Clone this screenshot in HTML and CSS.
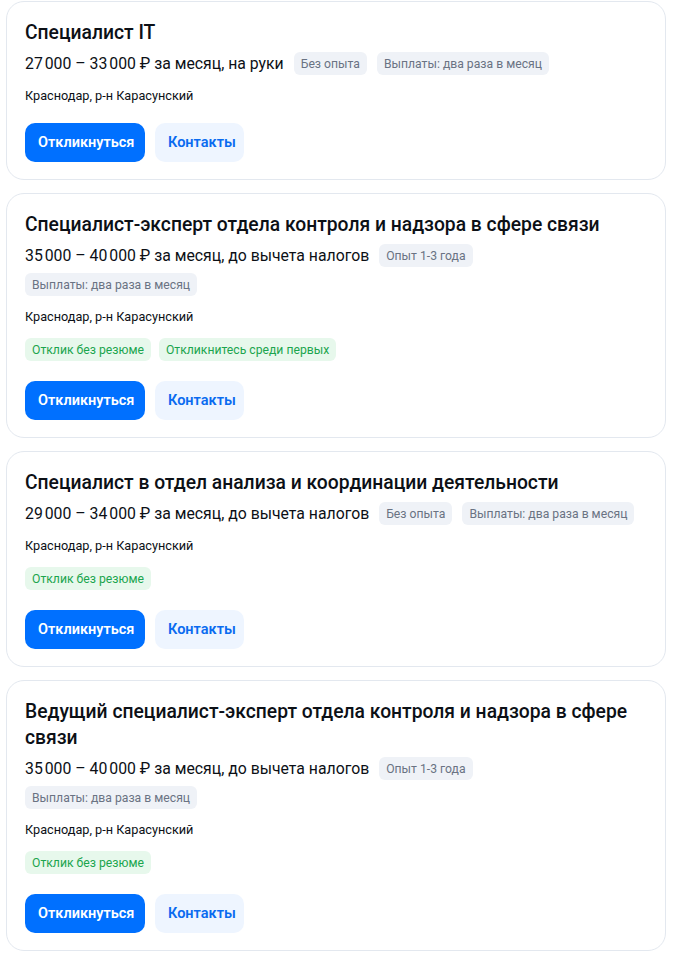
FILE: index.html
```html
<!DOCTYPE html>
<html lang="ru">
<head>
<meta charset="utf-8">
<link rel="stylesheet" href="styles.css">
</head>
<body>
<div class="list">
  <div class="card">
    <div class="title">Специалист IT</div>
    <div class="tags-row">
      <span class="salary">27&#8239;000 – 33&#8239;000 ₽ за месяц, на руки</span>
      <span class="tag">Без опыта</span>
      <span class="tag">Выплаты: два раза в месяц</span>
    </div>
    <div class="location">Краснодар, р-н Карасунский</div>
    <div class="actions">
      <button class="btn btn-primary">Откликнуться</button>
      <button class="btn btn-secondary">Контакты</button>
    </div>
  </div>

  <div class="card">
    <div class="title">Специалист-эксперт отдела контроля и надзора в сфере связи</div>
    <div class="tags-row">
      <span class="salary">35&#8239;000 – 40&#8239;000 ₽ за месяц, до вычета налогов</span>
      <span class="tag">Опыт 1-3 года</span>
      <span class="tag">Выплаты: два раза в месяц</span>
    </div>
    <div class="location">Краснодар, р-н Карасунский</div>
    <div class="green-row">
      <span class="tag tag-green">Отклик без резюме</span>
      <span class="tag tag-green">Откликнитесь среди первых</span>
    </div>
    <div class="actions">
      <button class="btn btn-primary">Откликнуться</button>
      <button class="btn btn-secondary">Контакты</button>
    </div>
  </div>

  <div class="card">
    <div class="title">Специалист в отдел анализа и координации деятельности</div>
    <div class="tags-row">
      <span class="salary">29&#8239;000 – 34&#8239;000 ₽ за месяц, до вычета налогов</span>
      <span class="tag">Без опыта</span>
      <span class="tag">Выплаты: два раза в месяц</span>
    </div>
    <div class="location">Краснодар, р-н Карасунский</div>
    <div class="green-row">
      <span class="tag tag-green">Отклик без резюме</span>
    </div>
    <div class="actions">
      <button class="btn btn-primary">Откликнуться</button>
      <button class="btn btn-secondary">Контакты</button>
    </div>
  </div>

  <div class="card">
    <div class="title">Ведущий специалист-эксперт отдела контроля и надзора в сфере связи</div>
    <div class="tags-row">
      <span class="salary">35&#8239;000 – 40&#8239;000 ₽ за месяц, до вычета налогов</span>
      <span class="tag">Опыт 1-3 года</span>
      <span class="tag">Выплаты: два раза в месяц</span>
    </div>
    <div class="location">Краснодар, р-н Карасунский</div>
    <div class="green-row">
      <span class="tag tag-green">Отклик без резюме</span>
    </div>
    <div class="actions">
      <button class="btn btn-primary">Откликнуться</button>
      <button class="btn btn-secondary">Контакты</button>
    </div>
  </div>
</div>
</body>
</html>
```
FILE: styles.css
```css
* { box-sizing: border-box; }
body {
  margin: 0;
  background: #fff;
  font-family: "Roboto", "Liberation Sans", sans-serif;
  color: #0c1016;
}
.list {
  width: 660px;
  margin: 1px 0 0 6px;
  display: flex;
  flex-direction: column;
  gap: 13px;
}
.card {
  border: 1px solid #e3e8ef;
  border-radius: 18px;
  padding: 18px 18px 17px 18px;
  display: flex;
  flex-direction: column;
}
.title {
  font-size: 19.3px;
  font-weight: 500;
  line-height: 26px;
}
.tags-row {
  margin-top: 6px;
  display: flex;
  flex-wrap: wrap;
  align-items: center;
  column-gap: 10px;
  row-gap: 6px;
}
.salary {
  font-size: 15.8px;
  line-height: 23px;
}
.tag {
  display: inline-flex;
  align-items: center;
  height: 23px;
  padding: 0 7px;
  border-radius: 6px;
  background: #eff2f7;
  color: #6a7383;
  font-size: 12.2px;
}
.tag-green {
  background: #e7f8ec;
  color: #1ba54e;
}
.location {
  margin-top: 12px;
  font-size: 12.7px;
  line-height: 18px;
}
.green-row {
  margin-top: 12px;
  display: flex;
  gap: 8px;
}
.actions {
  margin-top: 18px;
  display: flex;
  gap: 10px;
}
.green-row + .actions { margin-top: 20px; }
.btn {
  height: 39px;
  border: none;
  border-radius: 10px;
  font-family: inherit;
  font-size: 14.5px;
  font-weight: 600;
  padding: 0 13px;
}
.btn-primary {
  background: #0070ff;
  color: #fff;
  width: 120px;
}
.btn-secondary {
  background: #eef5ff;
  color: #0a6bf0;
  width: 89px;
}
```
